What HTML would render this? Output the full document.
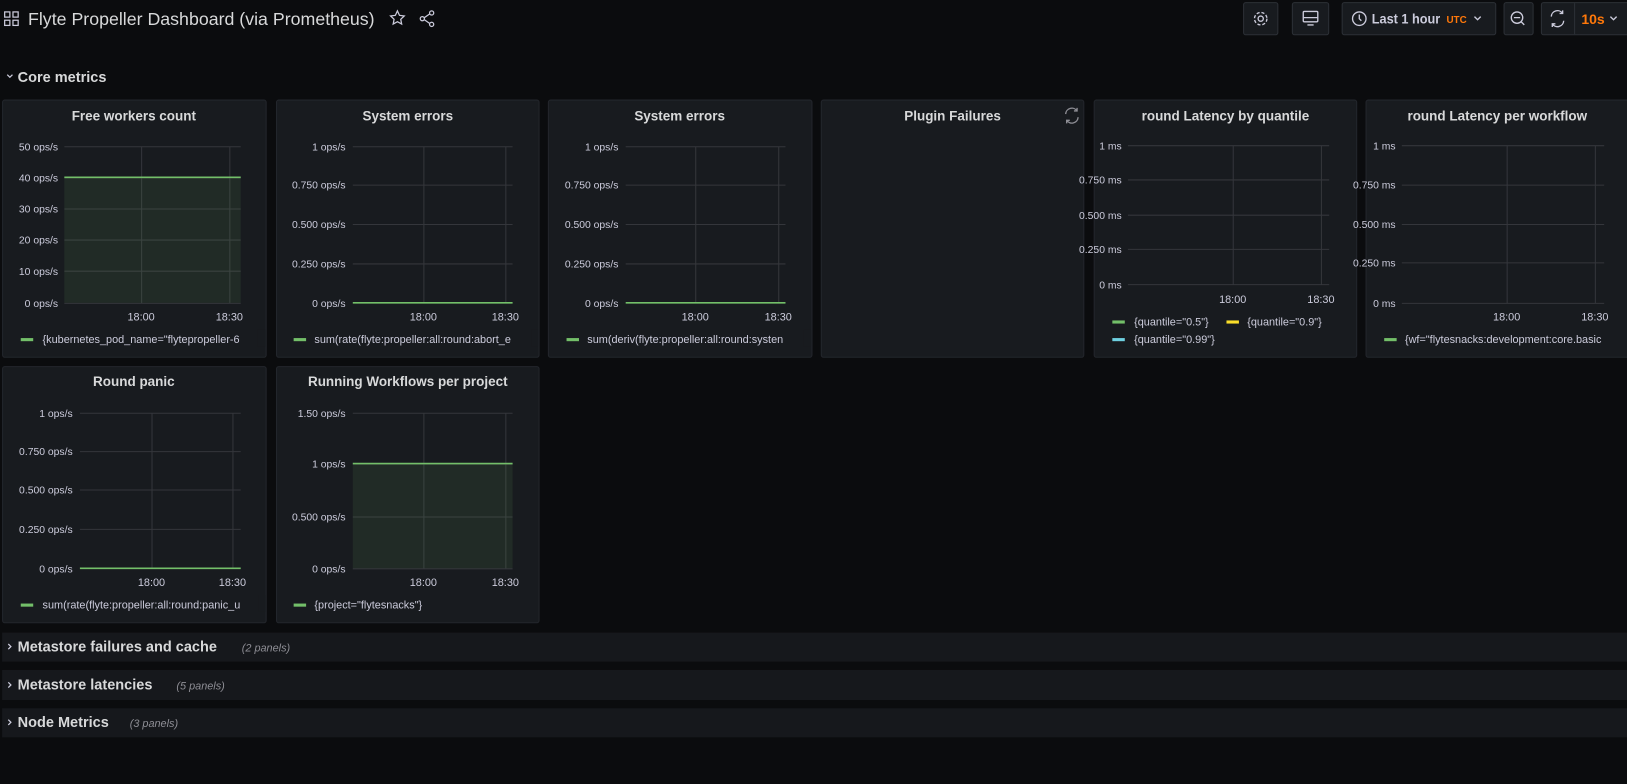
<!DOCTYPE html>
<html><head><meta charset="utf-8"><style>
html,body{margin:0;padding:0;background:#0b0c0e;width:1627px;height:784px;overflow:hidden}
svg{display:block}
text{font-family:"Liberation Sans",sans-serif;fill:#ccccdc}
.t{font-size:13px;font-weight:bold;text-anchor:middle;fill:#d8d9da}
.y{font-size:10px;text-anchor:end}
.x{font-size:10.5px;text-anchor:middle}
.l{font-size:10.5px}
.g{stroke:#34363b;stroke-width:1}
.p{fill:#181b1f;stroke:#23262c}
.r{font-size:14px;font-weight:bold;fill:#d8d9da}
.c{font-size:10.5px;font-style:italic;fill:#8e8e95}
.b{fill:#181b1f;stroke:#2c3036}
</style></head><body>
<svg width="1627" height="784" viewBox="0 0 1568 756" preserveAspectRatio="none" xmlns="http://www.w3.org/2000/svg">
<rect width="1568" height="756" fill="#0b0c0e"/>
<!-- header -->
<g fill="none" stroke="#ccccdc" stroke-width="1.2">
<rect x="4.5" y="11.5" width="5" height="5"/><rect x="12.5" y="11.5" width="5" height="5"/>
<rect x="4.5" y="19.5" width="5" height="5"/><rect x="12.5" y="19.5" width="5" height="5"/>
<path d="M383 10.5l2 4.3 4.6.6-3.4 3.2.9 4.6-4.1-2.3-4.1 2.3.9-4.6-3.4-3.2 4.6-.6z"/>
<circle cx="407" cy="18" r="2"/><circle cx="416" cy="12.5" r="2"/><circle cx="416" cy="23.5" r="2"/>
<path d="M409 17l5-3.5M409 19l5 3.5"/>
</g>
<text x="27" y="24" style="font-size:17px;fill:#d8d9da" textLength="334" lengthAdjust="spacingAndGlyphs">Flyte Propeller Dashboard (via Prometheus)</text>
<rect class="b" x="1198.5" y="2.5" width="33" height="31" rx="2"/>
<g fill="none" stroke="#ccccdc" stroke-width="1.3">
<circle cx="1215" cy="18" r="2.5"/><circle cx="1215" cy="18" r="6" stroke-dasharray="3 1.8"/>
</g>
<rect class="b" x="1245.5" y="2.5" width="35" height="31" rx="2"/>
<g fill="none" stroke="#ccccdc" stroke-width="1.3"><rect x="1256" y="11" width="14" height="10" rx="1"/><path d="M1256 17h14M1260 24h6"/></g>
<rect class="b" x="1293.5" y="2.5" width="148" height="31" rx="2"/>
<g fill="none" stroke="#ccccdc" stroke-width="1.3"><circle cx="1310" cy="18" r="6.5"/><path d="M1310 14v4l2 2"/><path d="M1421 16l3 3 3-3"/></g>
<text x="1322" y="22.5" style="font-size:13px;font-weight:bold" textLength="66" lengthAdjust="spacingAndGlyphs">Last 1 hour</text>
<text x="1394" y="22" style="font-size:9.5px;font-weight:bold;fill:#ff780a">UTC</text>
<rect class="b" x="1449.5" y="2.5" width="28" height="31" rx="2"/>
<g fill="none" stroke="#ccccdc" stroke-width="1.3"><circle cx="1462" cy="17" r="5.5"/><path d="M1459 17h6M1466 21l3 3"/></g>
<rect class="b" x="1485.5" y="2.5" width="90" height="31" rx="2"/>
<path d="M1517.5 3v30" stroke="#2c3036"/>
<g fill="none" stroke="#ccccdc" stroke-width="1.3"><path d="M1495 16a6 6 0 0 1 11-3M1507 20a6 6 0 0 1-11 3M1506 10v3h-3M1496 26v-3h3"/><path d="M1552 16l3 3 3-3"/></g>
<text x="1524" y="23" style="font-size:13.5px;font-weight:bold;fill:#ff780a">10s</text>
<!-- core metrics -->
<path d="M7 72l2.5 2.5 2.5-2.5" fill="none" stroke="#ccccdc" stroke-width="1.2"/>
<text x="17" y="79" class="r">Core metrics</text>

<!-- Panel 1 -->
<rect class="p" x="2.5" y="96.5" width="254" height="248" rx="2"/>
<text class="t" x="129" y="116">Free workers count</text>
<g class="g"><path d="M62 141.5h170M62 171.5h170M62 201.5h170M62 231.5h170M62 261.5h170M62 292.5h170M136.5 141v151M221.5 141v151"/></g>
<rect x="62" y="171" width="170" height="121" fill="#73bf69" opacity="0.1"/>
<path d="M62 171h170" stroke="#73bf69" stroke-width="1.5"/>
<text class="y" x="56" y="145">50 ops/s</text><text class="y" x="56" y="175">40 ops/s</text><text class="y" x="56" y="205">30 ops/s</text><text class="y" x="56" y="235">20 ops/s</text><text class="y" x="56" y="265">10 ops/s</text><text class="y" x="56" y="296">0 ops/s</text>
<text class="x" x="136" y="309">18:00</text><text class="x" x="221" y="309">18:30</text>
<rect x="20" y="326" width="12" height="3" fill="#73bf69"/><text class="l" x="41" y="331">{kubernetes_pod_name="flytepropeller-6</text>
<rect x="248" y="318" width="8" height="16" fill="#181b1f"/>

<!-- Panel 2 -->
<rect class="p" x="266.5" y="96.5" width="253" height="248" rx="2"/>
<text class="t" x="393" y="116">System errors</text>
<g class="g"><path d="M340 141.5h154M340 178.5h154M340 216.5h154M340 254.5h154M408.5 141v151M487.5 141v151"/></g>
<path d="M340 292h154" stroke="#73bf69" stroke-width="1.5"/>
<text class="y" x="333" y="145">1 ops/s</text><text class="y" x="333" y="182">0.750 ops/s</text><text class="y" x="333" y="220">0.500 ops/s</text><text class="y" x="333" y="258">0.250 ops/s</text><text class="y" x="333" y="296">0 ops/s</text>
<text class="x" x="408" y="309">18:00</text><text class="x" x="487" y="309">18:30</text>
<rect x="283" y="326" width="12" height="3" fill="#73bf69"/><text class="l" x="303" y="331">sum(rate(flyte:propeller:all:round:abort_e</text>
<rect x="512" y="318" width="7" height="16" fill="#181b1f"/>

<!-- Panel 3 -->
<rect class="p" x="528.5" y="96.5" width="254" height="248" rx="2"/>
<text class="t" x="655" y="116">System errors</text>
<g class="g"><path d="M603 141.5h154M603 178.5h154M603 216.5h154M603 254.5h154M670.5 141v151M750.5 141v151"/></g>
<path d="M603 292h154" stroke="#73bf69" stroke-width="1.5"/>
<text class="y" x="596" y="145">1 ops/s</text><text class="y" x="596" y="182">0.750 ops/s</text><text class="y" x="596" y="220">0.500 ops/s</text><text class="y" x="596" y="258">0.250 ops/s</text><text class="y" x="596" y="296">0 ops/s</text>
<text class="x" x="670" y="309">18:00</text><text class="x" x="750" y="309">18:30</text>
<rect x="546" y="326" width="12" height="3" fill="#73bf69"/><text class="l" x="566" y="331">sum(deriv(flyte:propeller:all:round:systen</text>
<rect x="774" y="318" width="8" height="16" fill="#181b1f"/>

<!-- Panel 4 -->
<rect class="p" x="791.5" y="96.5" width="253" height="248" rx="2"/>
<text class="t" x="918" y="116">Plugin Failures</text>
<g fill="none" stroke="#8e8e95" stroke-width="1.3"><path d="M1027 110a6 6 0 0 1 11-3M1039 113a6 6 0 0 1-11 3M1038 104v3h-3M1028 119v-3h3"/></g>

<!-- Panel 5 -->
<rect class="p" x="1054.5" y="96.5" width="253" height="248" rx="2"/>
<text class="t" x="1181" y="116">round Latency by quantile</text>
<g class="g"><path d="M1087 140.5h194M1087 173.5h194M1087 207.5h194M1087 240.5h194M1087 274.5h194M1188.5 140v134M1273.5 140v134"/></g>
<text class="y" x="1081" y="144">1 ms</text><text class="y" x="1081" y="177">0.750 ms</text><text class="y" x="1081" y="211">0.500 ms</text><text class="y" x="1081" y="244">0.250 ms</text><text class="y" x="1081" y="278">0 ms</text>
<text class="x" x="1188" y="292">18:00</text><text class="x" x="1273" y="292">18:30</text>
<rect x="1072" y="309" width="12" height="3" fill="#73bf69"/><text class="l" x="1093" y="314">{quantile="0.5"}</text>
<rect x="1182" y="309" width="12" height="3" fill="#fade2a"/><text class="l" x="1202" y="314">{quantile="0.9"}</text>
<rect x="1072" y="326" width="12" height="3" style="fill:#6ed0e0"/><text class="l" x="1093" y="331">{quantile="0.99"}</text>

<!-- Panel 6 -->
<rect class="p" x="1316.5" y="96.5" width="260" height="248" rx="2"/>
<text class="t" x="1443" y="116">round Latency per workflow</text>
<g class="g"><path d="M1351 140.5h195M1351 178.5h195M1351 216.5h195M1351 253.5h195M1351 292.5h195M1452.5 140v152M1537.5 140v152"/></g>
<text class="y" x="1345" y="144">1 ms</text><text class="y" x="1345" y="182">0.750 ms</text><text class="y" x="1345" y="220">0.500 ms</text><text class="y" x="1345" y="257">0.250 ms</text><text class="y" x="1345" y="296">0 ms</text>
<text class="x" x="1452" y="309">18:00</text><text class="x" x="1537" y="309">18:30</text>
<rect x="1334" y="326" width="12" height="3" fill="#73bf69"/><text class="l" x="1354" y="331">{wf="flytesnacks:development:core.basic</text>

<!-- Row2 Panel 1 -->
<rect class="p" x="2.5" y="353.5" width="254" height="247" rx="2"/>
<text class="t" x="129" y="372">Round panic</text>
<g class="g"><path d="M77 398.5h155M77 435.5h155M77 472.5h155M77 510.5h155M146.5 398v150M224.5 398v150"/></g>
<path d="M77 548h155" stroke="#73bf69" stroke-width="1.5"/>
<text class="y" x="70" y="402">1 ops/s</text><text class="y" x="70" y="439">0.750 ops/s</text><text class="y" x="70" y="476">0.500 ops/s</text><text class="y" x="70" y="514">0.250 ops/s</text><text class="y" x="70" y="552">0 ops/s</text>
<text class="x" x="146" y="565">18:00</text><text class="x" x="224" y="565">18:30</text>
<rect x="20" y="582" width="12" height="3" fill="#73bf69"/><text class="l" x="41" y="587">sum(rate(flyte:propeller:all:round:panic_u</text>
<rect x="249" y="574" width="7" height="16" fill="#181b1f"/>

<!-- Row2 Panel 2 -->
<rect class="p" x="266.5" y="353.5" width="253" height="247" rx="2"/>
<text class="t" x="393" y="372">Running Workflows per project</text>
<g class="g"><path d="M340 398.5h154M340 447.5h154M340 498.5h154M340 548.5h154M408.5 398v150M487.5 398v150"/></g>
<rect x="340" y="447" width="154" height="101" fill="#73bf69" opacity="0.1"/>
<path d="M340 447h154" stroke="#73bf69" stroke-width="1.5"/>
<text class="y" x="333" y="402">1.50 ops/s</text><text class="y" x="333" y="451">1 ops/s</text><text class="y" x="333" y="502">0.500 ops/s</text><text class="y" x="333" y="552">0 ops/s</text>
<text class="x" x="408" y="565">18:00</text><text class="x" x="487" y="565">18:30</text>
<rect x="283" y="582" width="12" height="3" fill="#73bf69"/><text class="l" x="303" y="587">{project="flytesnacks"}</text>

<!-- collapsed rows -->
<rect x="2" y="610" width="1566" height="28" fill="#16181c"/>
<rect x="2" y="646" width="1566" height="29" fill="#16181c"/>
<rect x="2" y="683" width="1566" height="28" fill="#16181c"/>
<g fill="none" stroke="#ccccdc" stroke-width="1.2"><path d="M8 621l2.5 2.5-2.5 2.5M8 658l2.5 2.5-2.5 2.5M8 694l2.5 2.5-2.5 2.5"/></g>
<text class="r" x="17" y="628">Metastore failures and cache</text><text class="c" x="233" y="628">(2 panels)</text>
<text class="r" x="17" y="665">Metastore latencies</text><text class="c" x="170" y="665">(5 panels)</text>
<text class="r" x="17" y="701">Node Metrics</text><text class="c" x="125" y="701">(3 panels)</text>
</svg>
</body></html>
